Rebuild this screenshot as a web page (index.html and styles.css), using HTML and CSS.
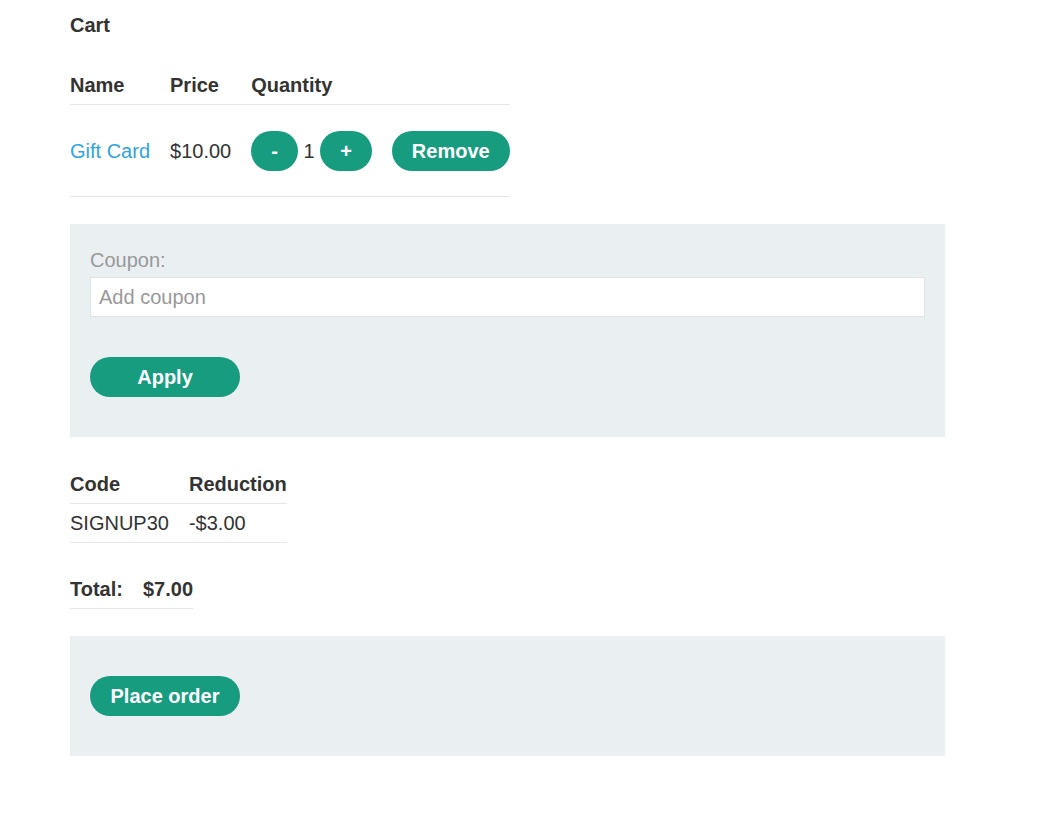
FILE: index.html
```html
<!DOCTYPE html>
<html lang="en">
<head>
    <meta charset="UTF-8">
    <meta name="viewport" content="width=device-width, initial-scale=1.0">
    <title>Cart</title>
    <link rel="stylesheet" href="styles.css">
</head>
<body>
    <div class="container">
        <p class="cart_title">Cart</p>
        <table class="cart_table">
            <tr>
                <th>Name</th>
                <th>Price</th>
                <th>Quantity</th>
                <th></th>
            </tr>
            <tr>
                <td><a href="#">Gift Card</a></td>
                <td>$10.00</td>
                <td><button class="button small">-</button> 1 <button class="button small">+</button></td>
                <td><button class="button small">Remove</button></td>
            </tr>
        </table>

        <form class="box">
            <label for="coupon">Coupon:</label>
            <input type="text" id="coupon" class="coupon_input" placeholder="Add coupon">
            <button type="button" class="button">Apply</button>
        </form>

        <table class="info_table">
            <tr>
                <th>Code</th>
                <th>Reduction</th>
            </tr>
            <tr>
                <td>SIGNUP30</td>
                <td>-$3.00</td>
            </tr>
        </table>

        <table class="info_table">
            <tr>
                <th>Total:</th>
                <th>$7.00</th>
            </tr>
        </table>

        <form class="box">
            <button type="button" class="button">Place order</button>
        </form>
    </div>
</body>
</html>
```

FILE: styles.css
```css
body{
    margin: 0;
    font-family: "Liberation Sans", Arial, sans-serif;
    font-size: 20px;
    line-height: 24px;
    color: #333332;
    background: #fff;
}
.container{
    width: 875px;
    margin-left: 70px;
    padding-top: 13px;
}
.cart_title{
    margin: 0 0 29px;
    font-weight: bold;
}
a{
    color: #2fa4e3;
    text-decoration: none;
}

table{
    border-collapse: collapse;
    border-spacing: 0;
    margin-bottom: 27px;
}
th, td{
    padding: 7px 20px 7px 0;
    text-align: left;
    border-bottom: 1px solid #e6e6e6;
}
th:last-child,
td:last-child{
    padding-right: 0;
}
th{
    font-weight: bold;
}
.cart_table td{
    padding-top: 26px;
    padding-bottom: 25px;
}

.button{
    display: inline-block;
    box-sizing: border-box;
    min-width: 150px;
    height: 40px;
    line-height: 40px;
    padding: 0 20px;
    margin: 20px 0;
    vertical-align: top;
    border: none;
    border-radius: 25px;
    background-color: #179c7f;
    color: #fff;
    font-family: "Liberation Sans", Arial, sans-serif;
    font-size: 20px;
    font-weight: bold;
    cursor: pointer;
}
.button.small{
    min-width: 0;
    margin: 0;
    vertical-align: baseline;
}

.box{
    margin: 0 0 28px;
    padding: 20px;
    background-color: #eaeff1;
}
.box label{
    display: block;
    padding-top: 4px;
    margin-bottom: 5px;
    color: #999;
}
.coupon_input{
    display: block;
    box-sizing: border-box;
    width: 100%;
    height: 40px;
    margin: 0 0 20px;
    padding: 0 8px;
    border: 1px solid #e3e3e3;
    background: #fff;
    font-family: "Liberation Sans", Arial, sans-serif;
    font-size: 20px;
    color: #333332;
}
.coupon_input::placeholder{
    color: #999;
}
```
